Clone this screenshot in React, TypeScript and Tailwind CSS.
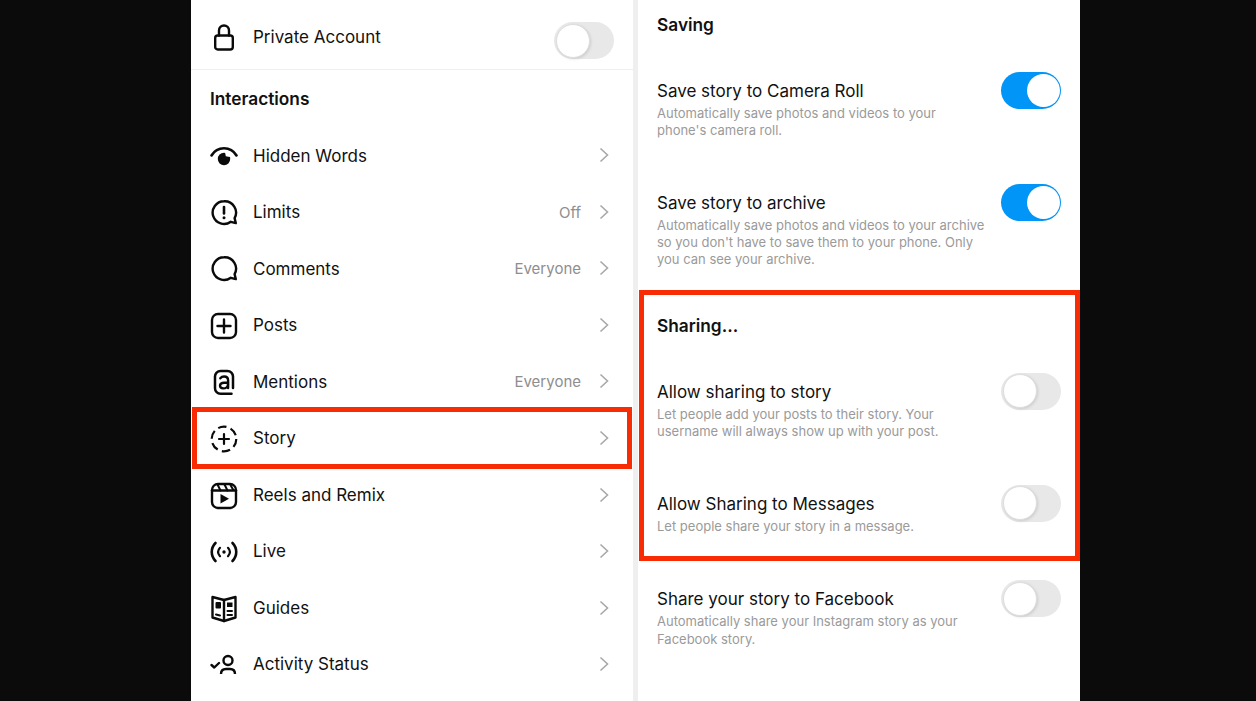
import type { ReactNode } from 'react';

const strokeProps = {
  fill: 'none',
  stroke: '#0a0a0a',
  strokeWidth: 2.4,
  strokeLinecap: 'round' as const,
  strokeLinejoin: 'round' as const,
};

const Icon = ({ children }: { children: ReactNode }) => (
  <svg viewBox="0 0 28 28" className="h-[28px] w-[28px] shrink-0">
    {children}
  </svg>
);

const LockIcon = () => (
  <Icon>
    <rect x="5.2" y="11.5" width="17.6" height="14" rx="2.5" {...strokeProps} />
    <path d="M9 11.5V6.500a5 5 0 0 1 10 0v5" {...strokeProps} />
  </Icon>
);

const EyeIcon = () => (
  <Icon>
    <path d="M1.500 13.500C4.500 8.500 9 6.300 14 6.300s9.500 2.200 12.500 7.200" {...strokeProps} strokeWidth={2.600} />
    <circle cx="14" cy="17" r="6.200" fill="#0a0a0a" />
    <path d="M15 10.300l.8 4 4 .8 1-3-3-2.500z" fill="#fff" />
  </Icon>
);

const LimitsIcon = () => (
  <Icon>
    <path
      d="M14 2.200a11.400 11.400 0 1 0 6.800 20.600l5 1.300-1.200-5A11.400 11.400 0 0 0 14 2.200z"
      {...strokeProps}
    />
    <path d="M14 8v6.500" {...strokeProps} strokeWidth={2.600} />
    <circle cx="14" cy="18.800" r="1.500" fill="#0a0a0a" />
  </Icon>
);

const CommentIcon = () => (
  <Icon>
    <path
      d="M14 2.200a11.400 11.400 0 1 0 6.800 20.600l5 1.300-1.200-5A11.400 11.400 0 0 0 14 2.200z"
      {...strokeProps}
    />
  </Icon>
);

const PostsIcon = () => (
  <Icon>
    <rect x="2" y="2" width="24" height="24" rx="6" {...strokeProps} />
    <path d="M14 7.500v13M7.500 14h13" {...strokeProps} />
  </Icon>
);

const MentionsIcon = () => (
  <Icon>
    <path d="M21.500 25.800H10.500A5.500 5.500 0 0 1 5 20.300V8.500A5.500 5.500 0 0 1 10.500 3h7A5.500 5.500 0 0 1 23 8.500V20" {...strokeProps} strokeWidth={2.500} />
    <path d="M10.300 10.300c1-1.200 2.300-1.800 3.800-1.800 2.500 0 4 1.400 4 3.700v7.800" {...strokeProps} />
    <path d="M18 14.800h-4c-2.400 0-4 1.100-4 2.800s1.400 2.800 3.300 2.800c2.400 0 4.700-1.400 4.700-4" {...strokeProps} />
  </Icon>
);

const StoryIcon = () => (
  <Icon>
    <circle cx="14" cy="14" r="12.300" {...strokeProps} strokeWidth={2.200} strokeLinecap="butt" strokeDasharray="8.500 4.400" />
    <path d="M14 9v10M9 14h10" {...strokeProps} strokeWidth={2.200} />
  </Icon>
);

const ReelsIcon = () => (
  <Icon>
    <rect x="2" y="2" width="24" height="24" rx="6" {...strokeProps} />
    <path d="M2 8.500h24" {...strokeProps} />
    <path d="M7.500 2.500l3 6M14.500 2.500l3 6M20.500 3l2.800 5" {...strokeProps} strokeWidth={2} />
    <path d="M10.500 12v9.500l8.500-4.750z" fill="#0a0a0a" />
  </Icon>
);

const LiveIcon = () => (
  <Icon>
    <path d="M5.500 5c-5 5.200-5 12.800 0 18M22.500 5c5 5.200 5 12.800 0 18" {...strokeProps} strokeWidth={2.600} />
    <path d="M10 9.800c-2.400 2.600-2.400 5.800 0 8.400M18 9.800c2.400 2.600 2.400 5.800 0 8.400" {...strokeProps} strokeWidth={2.200} />
    <circle cx="14" cy="14" r="1.700" fill="#0a0a0a" />
  </Icon>
);

const GuidesIcon = () => (
  <Icon>
    <path d="M14 5L2.500 2V22.500L14 26L25.500 22.500V2z" {...strokeProps} />
    <path d="M14 5v21" {...strokeProps} />
    <rect x="5.500" y="7" width="5.500" height="6.500" rx="1" fill="#0a0a0a" />
    <path d="M6 19.500l4 1" {...strokeProps} strokeWidth={2} />
    <rect x="17" y="7.500" width="5.500" height="4.500" fill="#0a0a0a" />
    <path d="M17.500 16h4.500M17.500 20h4.500" {...strokeProps} strokeWidth={2} />
  </Icon>
);

const ActivityIcon = () => (
  <Icon>
    <path d="M1.500 14l2.800 2.500 4.700-4.500" {...strokeProps} />
    <circle cx="18" cy="9.500" r="4.500" {...strokeProps} />
    <path d="M11 23c0-3 2-5 5-5h4c3 0 5 2 5 5" {...strokeProps} strokeLinecap="butt" />
  </Icon>
);

const Chevron = () => (
  <svg viewBox="0 0 10 16" className="-mt-[2px] h-[16px] w-[10px] shrink-0">
    <path d="M1.500 1.500L8.500 8L1.500 14.500" fill="none" stroke="#a8a8a8" strokeWidth="1.600" />
  </svg>
);

const Toggle = ({ on = false }: { on?: boolean }) => {
  if (on) {
    return (
      <div className="flex h-[37px] w-[60px] shrink-0 items-center justify-end rounded-full bg-[#0095f6] pr-[1.500px]">
        <div className="h-[33px] w-[33px] rounded-full bg-white" />
      </div>
    );
  }
  return (
    <div className="flex h-[37px] w-[60px] shrink-0 items-center rounded-full bg-[#e8e8e8] pl-[1.500px]">
      <div className="h-[34px] w-[34px] rounded-full border border-[#dedede] bg-white shadow-[1px_1px_3px_rgba(0,0,0,0.12)]" />
    </div>
  );
};

const menuRows: { label: string; icon: ReactNode; value?: string; marked?: boolean }[] = [
  { label: 'Hidden Words', icon: <EyeIcon /> },
  { label: 'Limits', icon: <LimitsIcon />, value: 'Off' },
  { label: 'Comments', icon: <CommentIcon />, value: 'Everyone' },
  { label: 'Posts', icon: <PostsIcon /> },
  { label: 'Mentions', icon: <MentionsIcon />, value: 'Everyone' },
  { label: 'Story', icon: <StoryIcon />, marked: true },
  { label: 'Reels and Remix', icon: <ReelsIcon /> },
  { label: 'Live', icon: <LiveIcon /> },
  { label: 'Guides', icon: <GuidesIcon /> },
  { label: 'Activity Status', icon: <ActivityIcon /> },
];

const MenuRow = ({ label, icon, value, marked }: (typeof menuRows)[number]) => (
  <div className="relative flex h-[56.550px] items-center pl-[19px] pr-[24px]">
    {icon}
    <span className="ml-[15px] text-[17px] text-[#111]">{label}</span>
    {value && <span className="ml-auto text-[15px] text-[#8e8e8e]">{value}</span>}
    <div className={value ? 'ml-[18px]' : 'ml-auto'}>
      <Chevron />
    </div>
    {marked && (
      <div className="absolute bottom-[-2px] left-[1px] right-[1px] top-[-4px] border-[5px] border-[#f72c05]" />
    )}
  </div>
);

interface SettingProps {
  title: string;
  lines: string[];
  on?: boolean;
  className: string;
}

const Setting = ({ title, lines, on, className }: SettingProps) => (
  <div className={`flex items-start justify-between ${className}`}>
    <div>
      <div className="h-[22px] text-[17px] leading-[22px] text-[#111]">{title}</div>
      <div className="mt-[3px] text-[13px] leading-[17.300px] text-[#9a9a9a]">
        {lines.map((line) => (
          <div key={line}>{line}</div>
        ))}
      </div>
    </div>
    <div className="-mt-[8px]">
      <Toggle on={on} />
    </div>
  </div>
);

export default function App() {
  return (
    <div className="flex h-[701px] w-[1256px] overflow-hidden bg-[#0b0b0b] pl-[191px] font-['Inter',sans-serif]">
      <div className="w-[442px] bg-white">
        <div className="flex h-[70px] items-start justify-between border-b border-[#efefef] pl-[19px] pr-[19px] pt-[22px]">
          <div className="mt-[2px] flex items-center">
            <LockIcon />
            <span className="ml-[15px] text-[17px] text-[#111]">Private Account</span>
          </div>
          <Toggle />
        </div>
        <div className="flex h-[58px] items-center pl-[19px] text-[17.300px] font-semibold text-[#111]">
          Interactions
        </div>
        {menuRows.map((row) => (
          <MenuRow key={row.label} {...row} />
        ))}
      </div>
      <div className="w-[5px] bg-[#efefef]" />
      <div className="w-[442px] bg-white">
        <div className="flex h-[50px] items-center pl-[19px] text-[17.300px] font-semibold text-[#111]">Saving</div>
        <Setting
          className="mt-[30px] pl-[19px] pr-[19px]"
          title="Save story to Camera Roll"
          lines={['Automatically save photos and videos to your', "phone's camera roll."]}
          on
        />
        <Setting
          className="mt-[52px] pl-[19px] pr-[19px]"
          title="Save story to archive"
          lines={[
            'Automatically save photos and videos to your archive',
            "so you don't have to save them to your phone. Only",
            'you can see your archive.',
          ]}
          on
        />
        <div className="ml-[1px] mt-[21.500px] h-[271px] border-[5px] border-[#f72c05] pl-[13px] pr-[14px]">
          <div className="flex h-[61px] items-center text-[17.300px] font-semibold text-[#111]">Sharing...</div>
          <Setting
            className="mt-[25px]"
            title="Allow sharing to story"
            lines={['Let people add your posts to their story. Your', 'username will always show up with your post.']}
          />
          <Setting
            className="mt-[52px]"
            title="Allow Sharing to Messages"
            lines={['Let people share your story in a message.']}
          />
        </div>
        <Setting
          className="mt-[27.500px] pl-[19px] pr-[19px]"
          title="Share your story to Facebook"
          lines={['Automatically share your Instagram story as your', 'Facebook story.']}
        />
      </div>
    </div>
  );
}
